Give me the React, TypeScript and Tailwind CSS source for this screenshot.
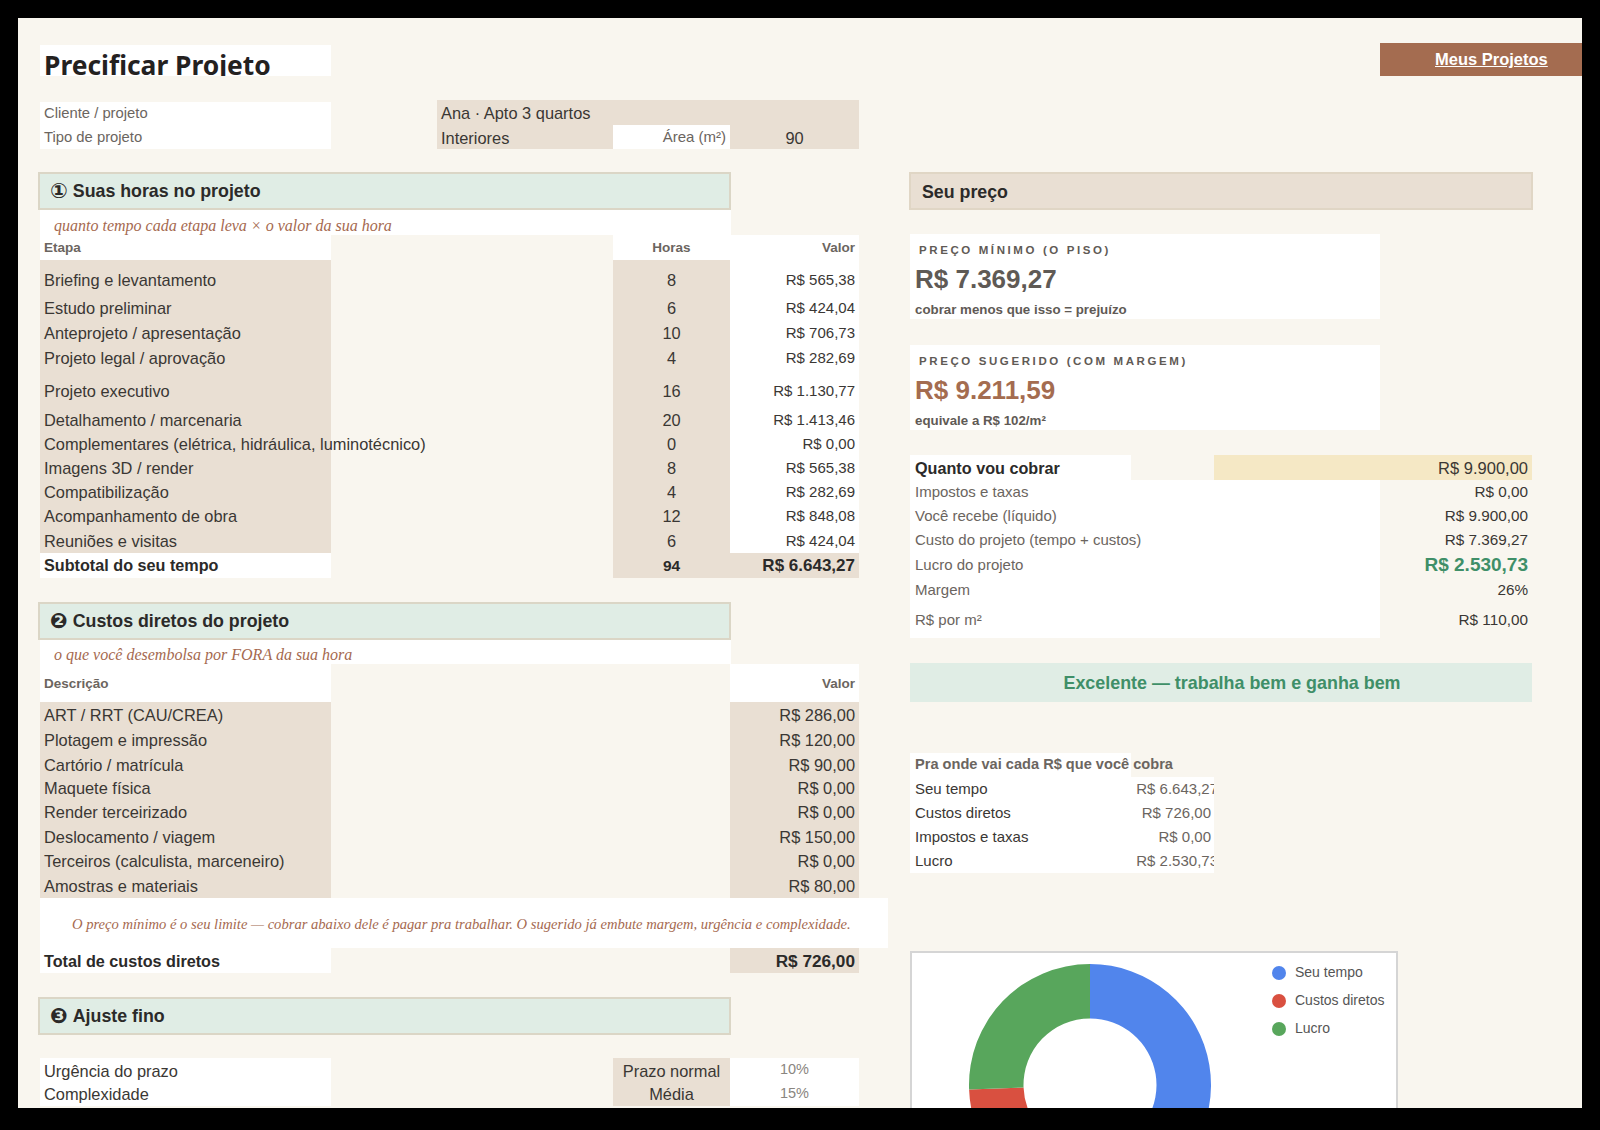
const hours = [
  { label: "Briefing e levantamento", h: "8", value: "R$ 565,38", height: "h-[36px] pt-[5px]" },
  { label: "Estudo preliminar", h: "6", value: "R$ 424,04", height: "h-[25px]" },
  { label: "Anteprojeto / apresentação", h: "10", value: "R$ 706,73", height: "h-[25px]" },
  { label: "Projeto legal / aprovação", h: "4", value: "R$ 282,69", height: "h-[25px]" },
  { label: "Projeto executivo", h: "16", value: "R$ 1.130,77", height: "h-[37px] pt-[3px]" },
  { label: "Detalhamento / marcenaria", h: "20", value: "R$ 1.413,46", height: "h-[24px] pt-[1px]" },
  { label: "Complementares (elétrica, hidráulica, luminotécnico)", h: "0", value: "R$ 0,00", height: "h-[24px]" },
  { label: "Imagens 3D / render", h: "8", value: "R$ 565,38", height: "h-[24px] pt-[1px]" },
  { label: "Compatibilização", h: "4", value: "R$ 282,69", height: "h-[24px]" },
  { label: "Acompanhamento de obra", h: "12", value: "R$ 848,08", height: "h-[25px]" },
  { label: "Reuniões e visitas", h: "6", value: "R$ 424,04", height: "h-[24px] pt-[1px]" },
];

const costs = [
  { label: "ART / RRT (CAU/CREA)", value: "R$ 286,00", height: "h-[26px] pt-[1px]" },
  { label: "Plotagem e impressão", value: "R$ 120,00", height: "h-[25px]" },
  { label: "Cartório / matrícula", value: "R$ 90,00", height: "h-[24px] pt-[1px]" },
  { label: "Maquete física", value: "R$ 0,00", height: "h-[23px]" },
  { label: "Render terceirizado", value: "R$ 0,00", height: "h-[24px] pt-[1px]" },
  { label: "Deslocamento / viagem", value: "R$ 150,00", height: "h-[25px] pt-[1px]" },
  { label: "Terceiros (calculista, marceneiro)", value: "R$ 0,00", height: "h-[24px] pt-[1px]" },
  { label: "Amostras e materiais", value: "R$ 80,00", height: "h-[25px] pt-[2px]" },
];

const summary = [
  { label: "Impostos e taxas", value: "R$ 0,00", height: "h-[24px]" },
  { label: "Você recebe (líquido)", value: "R$ 9.900,00", height: "h-[24px]" },
  { label: "Custo do projeto (tempo + custos)", value: "R$ 7.369,27", height: "h-[24px] pt-[1px]" },
  { label: "Lucro do projeto", value: "R$ 2.530,73", height: "h-[26px] pt-[1px]", profit: true },
  { label: "Margem", value: "26%", height: "h-[24px] pt-[1px]" },
  { label: "R$ por m²", value: "R$ 110,00", height: "h-[36px] pt-[1px]" },
];

const split = [
  { label: "Seu tempo", value: "R$ 6.643,27", clipped: true },
  { label: "Custos diretos", value: "R$ 726,00" },
  { label: "Impostos e taxas", value: "R$ 0,00" },
  { label: "Lucro", value: "R$ 2.530,73", clipped: true },
];

function arc(from: number, to: number) {
  const R = 121;
  const r = 66.5;
  const c = 121;
  const pt = (rad: number, t: number) => {
    const a = t * 2 * Math.PI;
    return `${c + rad * Math.sin(a)} ${c - rad * Math.cos(a)}`;
  };
  const large = to - from > 0.5 ? 1 : 0;
  return `M ${pt(R, from)} A ${R} ${R} 0 ${large} 1 ${pt(R, to)} L ${pt(r, to)} A ${r} ${r} 0 ${large} 0 ${pt(r, from)} Z`;
}

function SectionHeader({ num, title }: { num: string; title: string }) {
  return (
    <div className="flex h-[38px] w-[693px] -ml-[2px] items-center border-2 border-[#dbd6c6] bg-[#e0ede5] pl-[10px] text-[17.8px] font-bold text-[#2b2a29]">
      <span className="mr-[5px] font-['DejaVu_Sans'] text-[21px] font-bold leading-none">{num}</span>
      {title}
    </div>
  );
}

function Note({ children, height }: { children: string; height: string }) {
  return (
    <div className={`flex w-[691px] items-center bg-white pl-[14px] pt-[6px] font-['Liberation_Serif'] text-[16px] italic text-[#a5694f] ${height}`}>
      {children}
    </div>
  );
}

function PriceCard({ label, price, note, color }: { label: string; price: string; note: string; color: string }) {
  return (
    <div className="flex h-[85px] w-[470px] flex-col bg-white pl-[5px]">
      <div className="mt-[9px] pl-[4px] text-[11.5px] font-bold leading-[14px] tracking-[2.6px] text-[#5f5a55]">{label}</div>
      <div className={`mt-[5px] text-[26px] font-bold leading-[34px] ${color}`}>{price}</div>
      <div className="mt-[5px] text-[13.3px] font-bold leading-[18px] text-[#5f5a55]">{note}</div>
    </div>
  );
}

export default function App() {
  return (
    <div className="h-[1130px] w-[1600px] overflow-hidden bg-black pb-[22px] pl-[18px] pr-[18px] pt-[18px] font-['Liberation_Sans',sans-serif] text-[16.4px] text-[#3a3734]">
      <div className="h-full w-full overflow-hidden bg-[#f9f6ef]">
        {/* title row */}
        <div className="flex items-start justify-between pl-[22px] pt-[25px]">
          <div className="mt-[2px] flex h-[31px] w-[291px] items-end overflow-hidden bg-white pl-[4px] font-['Noto_Sans'] text-[26.4px] font-bold leading-[36px] text-[#24211f]">
            <span className="translate-y-[7px]">Precificar Projeto</span>
          </div>
          <div className="flex h-[33px] w-[202px] items-center bg-[#a46c50] pl-[55px] text-[16.5px] font-bold text-white underline">
            Meus Projetos
          </div>
        </div>

        <div className="flex">
          {/* left column */}
          <div className="w-[872px] pl-[22px]">
            <div className="mt-[24px] flex items-end">
              <div className="flex h-[47px] w-[291px] flex-col justify-center bg-white pl-[4px] text-[14.8px] leading-[24px] text-[#6b6560]">
                <div className="-translate-y-[1px]">Cliente / projeto</div>
                <div className="-translate-y-[1px]">Tipo de projeto</div>
              </div>
              <div className="ml-[106px] w-[422px] bg-[#e9dfd3]">
                <div className="flex h-[25px] items-center pl-[4px] pt-[2px]">Ana · Apto 3 quartos</div>
                <div className="flex h-[24px] items-center">
                  <div className="w-[176px] pl-[4px] pt-[2px]">Interiores</div>
                  <div className="flex h-full w-[117px] items-center justify-end bg-white pr-[4px] text-[15px] text-[#6b6560]">Área (m²)</div>
                  <div className="w-[129px] pt-[2px] text-center">90</div>
                </div>
              </div>
            </div>

            <div className="mt-[23px]">
              <SectionHeader num="①" title="Suas horas no projeto" />
            </div>
            <Note height="h-[25px]">quanto tempo cada etapa leva × o valor da sua hora</Note>
            <div className="flex h-[25px] items-center text-[13.5px] font-bold text-[#6b6560]">
              <div className="flex h-full w-[291px] items-center bg-white pl-[4px] pt-[1px]">Etapa</div>
              <div className="flex h-full w-[117px] ml-[282px] items-center justify-center bg-white pt-[1px]">Horas</div>
              <div className="flex h-full w-[129px] items-center justify-end bg-white pr-[4px] pt-[1px]">Valor</div>
            </div>
            {hours.map((row) => (
              <div key={row.label} className="flex">
                <div className={`flex w-[291px] items-center whitespace-nowrap bg-[#e9dfd3] pl-[4px] ${row.height}`}>{row.label}</div>
                <div className={`ml-[282px] flex w-[117px] items-center justify-center bg-[#e9dfd3] ${row.height}`}>{row.h}</div>
                <div className={`flex w-[129px] items-center justify-end bg-white pr-[4px] text-[15px] ${row.height}`}>{row.value}</div>
              </div>
            ))}
            <div className="flex h-[25px] font-bold text-[#2b2a29]">
              <div className="flex w-[291px] items-center bg-white pl-[4px] text-[16.2px]">Subtotal do seu tempo</div>
              <div className="ml-[282px] flex w-[117px] items-center justify-center bg-[#e9dfd3] text-[15.5px]">94</div>
              <div className="flex w-[129px] items-center justify-end bg-[#e9dfd3] pr-[4px] text-[17px]">R$ 6.643,27</div>
            </div>

            <div className="mt-[24px]">
              <SectionHeader num="❷" title="Custos diretos do projeto" />
            </div>
            <Note height="h-[24px]">o que você desembolsa por FORA da sua hora</Note>
            <div className="flex h-[38px] text-[13.5px] font-bold text-[#6b6560]">
              <div className="flex w-[291px] items-center bg-white pl-[4px] pt-[2px]">Descrição</div>
              <div className="ml-[399px] flex w-[129px] items-center justify-end bg-white pr-[4px] pt-[2px]">Valor</div>
            </div>
            {costs.map((row) => (
              <div key={row.label} className="flex">
                <div className={`flex w-[291px] items-center bg-[#e9dfd3] pl-[4px] ${row.height}`}>{row.label}</div>
                <div className={`ml-[399px] flex w-[129px] items-center justify-end bg-[#e9dfd3] pr-[4px] ${row.height}`}>{row.value}</div>
              </div>
            ))}
            <div className="flex h-[50px] w-[848px] items-center bg-white pl-[32px] pt-[3px] font-['Liberation_Serif'] text-[14.6px] italic text-[#a5694f]">
              O preço mínimo é o seu limite — cobrar abaixo dele é pagar pra trabalhar. O sugerido já embute margem, urgência e complexidade.
            </div>
            <div className="flex h-[25px] font-bold text-[#2b2a29]">
              <div className="flex w-[291px] items-center bg-white pl-[4px] pt-[2px] text-[16.2px]">Total de custos diretos</div>
              <div className="ml-[399px] flex w-[129px] items-center justify-end bg-[#e9dfd3] pr-[4px] pt-[2px] text-[17.2px]">R$ 726,00</div>
            </div>

            <div className="mt-[24px]">
              <SectionHeader num="❸" title="Ajuste fino" />
            </div>
            <div className="mt-[23px] flex h-[24px]">
              <div className="flex w-[291px] items-center bg-white pl-[4px] pt-[2px]">Urgência do prazo</div>
              <div className="ml-[282px] flex w-[117px] items-center justify-center bg-[#e9dfd3] pt-[2px]">Prazo normal</div>
              <div className="flex w-[129px] items-center justify-center bg-white text-[14.5px] text-[#8a8580]">10%</div>
            </div>
            <div className="flex h-[24px]">
              <div className="flex w-[291px] items-center bg-white pl-[4px]">Complexidade</div>
              <div className="ml-[282px] flex w-[117px] items-center justify-center bg-[#e9dfd3]">Média</div>
              <div className="flex w-[129px] items-center justify-center bg-white text-[14.5px] text-[#8a8580]">15%</div>
            </div>
          </div>

          {/* right column */}
          <div className="ml-[19px] w-[624px] pt-[96px]">
            <div className="flex h-[38px] items-center border-2 border-[#e0d6c5] bg-[#e9dfd3] pl-[11px] pt-[3px] text-[17.8px] font-bold text-[#2b2a29]">
              Seu preço
            </div>
            <div className="ml-[1px] mt-[24px]">
              <PriceCard label="PREÇO MÍNIMO (O PISO)" price="R$ 7.369,27" note="cobrar menos que isso = prejuízo" color="text-[#5f5a55]" />
            </div>
            <div className="ml-[1px] mt-[26px]">
              <PriceCard label="PREÇO SUGERIDO (COM MARGEM)" price="R$ 9.211,59" note="equivale a R$ 102/m²" color="text-[#a46c50]" />
            </div>

            <div className="ml-[1px] mt-[25px] w-[622px]">
              <div className="flex h-[25px]">
                <div className="flex w-[221px] items-center bg-white pl-[5px] pt-[1px] text-[16.2px] font-bold text-[#2b2a29]">Quanto vou cobrar</div>
                <div className="ml-[83px] flex w-[318px] items-center justify-end bg-[#f5e8c5] pr-[4px] pt-[1px] text-[16.5px]">R$ 9.900,00</div>
              </div>
              {summary.map((row) => (
                <div key={row.label} className="flex">
                  <div className={`flex w-[470px] items-center bg-white pl-[5px] text-[15px] text-[#6b6560] ${row.height}`}>{row.label}</div>
                  <div className={`flex flex-1 items-center justify-end pr-[4px] ${row.height} ${row.profit ? "text-[19px] font-bold text-[#3f8f68]" : "text-[15.3px]"}`}>
                    {row.value}
                  </div>
                </div>
              ))}
              <div className="mt-[25px] flex h-[39px] items-center justify-center bg-[#e0ede5] pl-[22px] pt-[1px] text-[17.9px] font-bold text-[#3f8f68]">
                Excelente — trabalha bem e ganha bem
              </div>
            </div>

            <div className="ml-[1px] mt-[51px] text-[15px]">
              <div className="flex h-[24px] w-[221px] items-center whitespace-nowrap bg-white pl-[5px] text-[14.6px] font-bold text-[#6b6560]">
                Pra onde vai cada R$ que você cobra
              </div>
              <div className="h-[96px] w-[304px] overflow-hidden bg-white pl-[5px] pr-[3px]">
                {split.map((row) => (
                  <div key={row.label} className="flex h-[24px] items-center justify-between whitespace-nowrap">
                    <span>{row.label}</span>
                    <span className={row.clipped ? "-mr-[7px] text-[#6b6560]" : "text-[#6b6560]"}>{row.value}</span>
                  </div>
                ))}
              </div>
            </div>

            <div className="ml-[1px] mt-[78px] flex h-[180px] w-[488px] border-2 border-[#d5d5d5] bg-white">
              <svg width="242" height="242" viewBox="0 0 242 242" className="ml-[57px] mt-[11px] shrink-0">
                <path d={arc(0, 0.671)} fill="#5185ec" />
                <path d={arc(0.671, 0.744)} fill="#d95040" />
                <path d={arc(0.744, 1)} fill="#58a65c" />
              </svg>
              <div className="ml-[61px] mt-[10px] flex flex-col gap-[9px] text-[14px] text-[#555]">
                {[
                  { label: "Seu tempo", color: "bg-[#5185ec]" },
                  { label: "Custos diretos", color: "bg-[#d95040]" },
                  { label: "Lucro", color: "bg-[#58a65c]" },
                ].map((item) => (
                  <div key={item.label} className="flex h-[19px] items-center gap-[9px] whitespace-nowrap">
                    <span className={`h-[14px] w-[14px] rounded-full ${item.color}`} />
                    {item.label}
                  </div>
                ))}
              </div>
            </div>
          </div>
        </div>
      </div>
    </div>
  );
}
